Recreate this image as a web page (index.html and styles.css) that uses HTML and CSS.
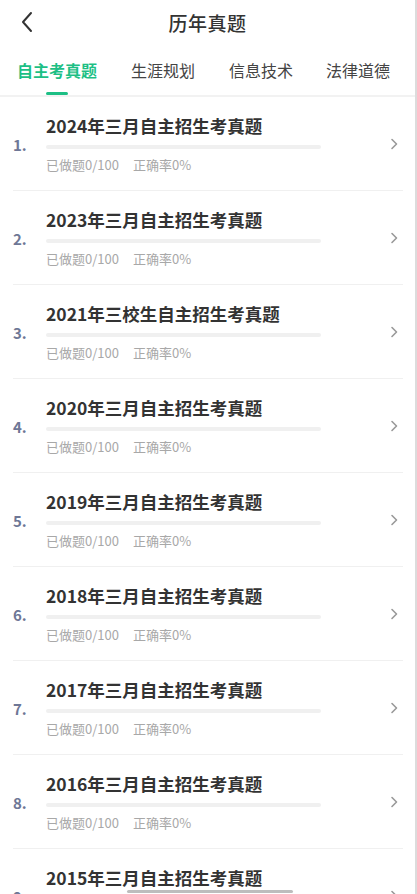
FILE: index.html
```html
<!DOCTYPE html>
<html lang="zh-CN">
<head>
<meta charset="utf-8">
<title>历年真题</title>
<link rel="stylesheet" href="styles.css">
</head>
<body>
<div class="page">
  <header class="topbar">
    <span class="back">
      <svg width="14" height="22" viewBox="0 0 14 22"><path d="M11 2 L3 11 L11 20" fill="none" stroke="#333" stroke-width="2" stroke-linecap="round" stroke-linejoin="round"/></svg>
    </span>
    <h1 class="title">历年真题</h1>
  </header>
  <nav class="tabs">
    <span class="tab active">自主考真题</span>
    <span class="tab">生涯规划</span>
    <span class="tab">信息技术</span>
    <span class="tab">法律道德</span>
  </nav>
  <ul class="list">
    <li class="item"><span class="num">1.</span><div class="content"><div class="name">2024年三月自主招生考真题</div><div class="bar"></div><div class="stats"><span>已做题0/100</span><span>正确率0%</span></div></div><span class="chev"><svg width="8" height="12" viewBox="0 0 8 12"><path d="M2 1.5 L6.5 6 L2 10.5" fill="none" stroke="#999" stroke-width="1.6" stroke-linecap="round" stroke-linejoin="round"/></svg></span></li>
    <li class="item"><span class="num">2.</span><div class="content"><div class="name">2023年三月自主招生考真题</div><div class="bar"></div><div class="stats"><span>已做题0/100</span><span>正确率0%</span></div></div><span class="chev"><svg width="8" height="12" viewBox="0 0 8 12"><path d="M2 1.5 L6.5 6 L2 10.5" fill="none" stroke="#999" stroke-width="1.6" stroke-linecap="round" stroke-linejoin="round"/></svg></span></li>
    <li class="item"><span class="num">3.</span><div class="content"><div class="name">2021年三校生自主招生考真题</div><div class="bar"></div><div class="stats"><span>已做题0/100</span><span>正确率0%</span></div></div><span class="chev"><svg width="8" height="12" viewBox="0 0 8 12"><path d="M2 1.5 L6.5 6 L2 10.5" fill="none" stroke="#999" stroke-width="1.6" stroke-linecap="round" stroke-linejoin="round"/></svg></span></li>
    <li class="item"><span class="num">4.</span><div class="content"><div class="name">2020年三月自主招生考真题</div><div class="bar"></div><div class="stats"><span>已做题0/100</span><span>正确率0%</span></div></div><span class="chev"><svg width="8" height="12" viewBox="0 0 8 12"><path d="M2 1.5 L6.5 6 L2 10.5" fill="none" stroke="#999" stroke-width="1.6" stroke-linecap="round" stroke-linejoin="round"/></svg></span></li>
    <li class="item"><span class="num">5.</span><div class="content"><div class="name">2019年三月自主招生考真题</div><div class="bar"></div><div class="stats"><span>已做题0/100</span><span>正确率0%</span></div></div><span class="chev"><svg width="8" height="12" viewBox="0 0 8 12"><path d="M2 1.5 L6.5 6 L2 10.5" fill="none" stroke="#999" stroke-width="1.6" stroke-linecap="round" stroke-linejoin="round"/></svg></span></li>
    <li class="item"><span class="num">6.</span><div class="content"><div class="name">2018年三月自主招生考真题</div><div class="bar"></div><div class="stats"><span>已做题0/100</span><span>正确率0%</span></div></div><span class="chev"><svg width="8" height="12" viewBox="0 0 8 12"><path d="M2 1.5 L6.5 6 L2 10.5" fill="none" stroke="#999" stroke-width="1.6" stroke-linecap="round" stroke-linejoin="round"/></svg></span></li>
    <li class="item"><span class="num">7.</span><div class="content"><div class="name">2017年三月自主招生考真题</div><div class="bar"></div><div class="stats"><span>已做题0/100</span><span>正确率0%</span></div></div><span class="chev"><svg width="8" height="12" viewBox="0 0 8 12"><path d="M2 1.5 L6.5 6 L2 10.5" fill="none" stroke="#999" stroke-width="1.6" stroke-linecap="round" stroke-linejoin="round"/></svg></span></li>
    <li class="item"><span class="num">8.</span><div class="content"><div class="name">2016年三月自主招生考真题</div><div class="bar"></div><div class="stats"><span>已做题0/100</span><span>正确率0%</span></div></div><span class="chev"><svg width="8" height="12" viewBox="0 0 8 12"><path d="M2 1.5 L6.5 6 L2 10.5" fill="none" stroke="#999" stroke-width="1.6" stroke-linecap="round" stroke-linejoin="round"/></svg></span></li>
    <li class="item"><span class="num">9.</span><div class="content"><div class="name">2015年三月自主招生考真题</div><div class="bar"></div><div class="stats"><span>已做题0/100</span><span>正确率0%</span></div></div><span class="chev"><svg width="8" height="12" viewBox="0 0 8 12"><path d="M2 1.5 L6.5 6 L2 10.5" fill="none" stroke="#999" stroke-width="1.6" stroke-linecap="round" stroke-linejoin="round"/></svg></span></li>
  </ul>
  <div class="home-indicator"></div>
</div>
</body>
</html>
```
FILE: styles.css
```css
* { box-sizing: border-box; }
html, body {
  margin: 0;
  padding: 0;
  background: #fff;
  overflow: hidden;
}
body {
  font-family: "Noto Sans CJK SC", "Noto Sans", sans-serif;
  color: #333;
}
.page {
  width: 417px;
  height: 894px;
  border-right: 2px solid #dcdcdc;
  overflow: hidden;
  position: relative;
}
.topbar {
  height: 44px;
  display: flex;
  align-items: center;
  justify-content: center;
  position: relative;
}
.back {
  position: absolute;
  left: 20px;
  top: 11px;
  display: flex;
}
.title {
  margin: 0;
  font-size: 19px;
  font-weight: 500;
  color: #333;
  letter-spacing: 0.5px;
}
.tabs {
  height: 53px;
  display: flex;
  align-items: flex-start;
  padding-top: 14px;
  border-bottom: 2px solid #f2f2f2;
}
.tab {
  font-size: 16px;
  color: #444;
  line-height: 24px;
  position: relative;
}
.tab:nth-child(1) { margin-left: 17px; }
.tab:nth-child(2) { margin-left: 34px; }
.tab:nth-child(3) { margin-left: 34px; }
.tab:nth-child(4) { margin-left: 33px; }
.tab.active {
  color: #1dbf85;
  font-weight: 700;
}
.tab.active::after {
  content: "";
  position: absolute;
  left: 29px;
  top: 34px;
  width: 22px;
  height: 3px;
  border-radius: 2px;
  background: #1dbf85;
}
.list {
  list-style: none;
  margin: 0;
  padding: 0;
}
.item {
  height: 94px;
  margin: 0 12px 0 13px;
  border-bottom: 1px solid #f0f0f0;
  display: flex;
  align-items: center;
}
.num {
  width: 33px;
  flex: none;
  font-size: 15px;
  font-weight: 700;
  color: #6e7796;
  padding-top: 1px;
}
.content {
  flex: 1;
  align-self: flex-start;
  padding-top: 17px;
}
.name {
  font-size: 17.5px;
  line-height: 24px;
  font-weight: 700;
  color: #333;
}
.bar {
  width: 275px;
  height: 4px;
  border-radius: 2px;
  background: #f0f0f0;
  margin-top: 7px;
}
.stats {
  margin-top: 7px;
  font-size: 13px;
  line-height: 18px;
  color: #a8a8a8;
  display: flex;
  gap: 14px;
}
.chev {
  flex: none;
  width: 18px;
  display: flex;
  justify-content: center;
}
.home-indicator {
  position: absolute;
  left: 127px;
  bottom: 1px;
  width: 166px;
  height: 3px;
  border-radius: 2px;
  background: #bdbdbd;
}
```
